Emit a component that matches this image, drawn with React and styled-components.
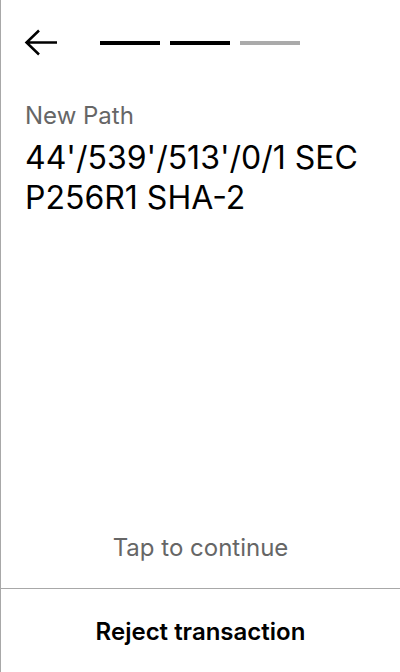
import styled, { createGlobalStyle } from "styled-components";

const GlobalStyle = createGlobalStyle`
  html, body {
    margin: 0;
    padding: 0;
    background: #fff;
    font-family: Inter, "Noto Sans", sans-serif;
  }
`;

const Screen = styled.div`
  box-sizing: border-box;
  width: 400px;
  height: 672px;
  display: flex;
  flex-direction: column;
  border-left: 1px solid #a8a8a8;
  background: #fff;
`;

const Header = styled.div`
  display: flex;
  align-items: center;
  gap: 42px;
  padding: 30px 0 0 23px;
  height: 26px;
`;

const BackButton = styled.button`
  display: flex;
  padding: 0;
  border: none;
  background: none;
  cursor: pointer;
`;

const Steps = styled.div`
  display: flex;
  gap: 10px;
`;

const Step = styled.div`
  width: 60px;
  height: 4px;
  background: ${(p) => (p.$done ? "#000" : "#aaa")};
`;

const Content = styled.div`
  flex: 1;
  display: flex;
  flex-direction: column;
  padding: 45px 24px 0 24px;
`;

const Label = styled.div`
  font-size: 24px;
  line-height: 30px;
  color: #666;
`;

const Value = styled.div`
  margin-top: 7px;
  font-size: 32px;
  line-height: 40px;
  color: #000;
  word-break: break-word;
`;

const Hint = styled.div`
  margin-top: auto;
  padding-bottom: 25px;
  line-height: 30px;
  text-align: center;
  font-size: 24px;
  color: #666;
`;

const Footer = styled.button`
  height: 84px;
  padding: 2px 0 0;
  border: none;
  border-top: 1px solid #a8a8a8;
  background: #fff;
  font-family: inherit;
  font-size: 24px;
  font-weight: 600;
  color: #000;
  cursor: pointer;
`;

export default function App() {
  return (
    <>
      <GlobalStyle />
      <Screen>
        <Header>
          <BackButton aria-label="Back">
            <svg width="34" height="28" viewBox="0 0 34 28" fill="none">
              <path d="M33 13.5H3M15 1.5L2.5 13.5L15 25.5" stroke="#000" strokeWidth="2.5" />
            </svg>
          </BackButton>
          <Steps>
            <Step $done />
            <Step $done />
            <Step />
          </Steps>
        </Header>
        <Content>
          <Label>New Path</Label>
          <Value>44'/539'/513'/0/1 SEC P256R1 SHA-2</Value>
          <Hint>Tap to continue</Hint>
        </Content>
        <Footer>Reject transaction</Footer>
      </Screen>
    </>
  );
}
